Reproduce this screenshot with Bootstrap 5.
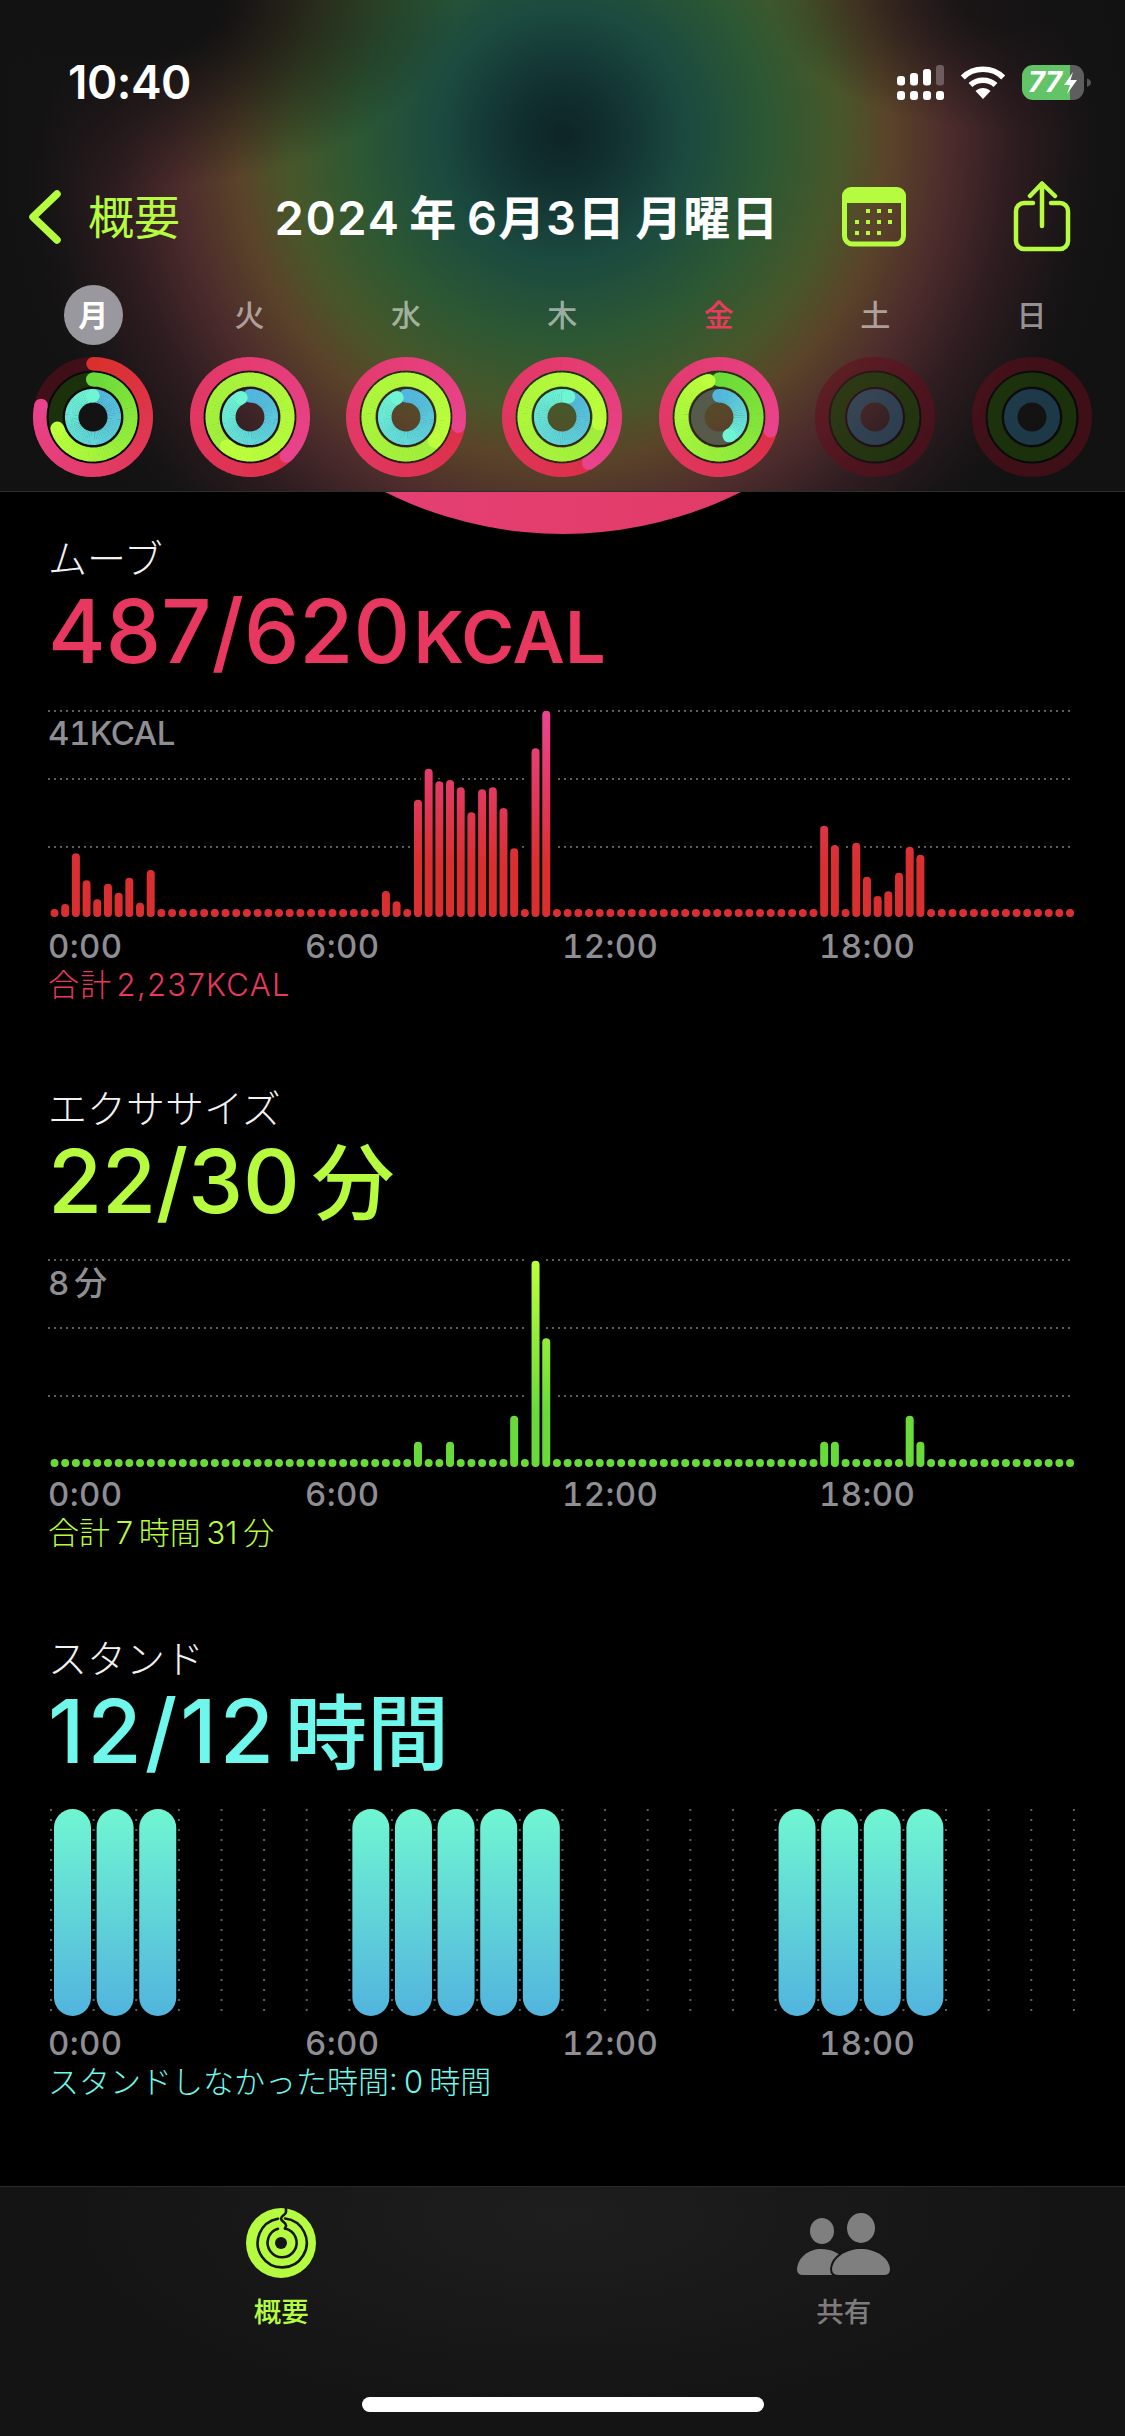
<!doctype html>
<html lang="ja">
<head>
<meta charset="utf-8">
<title>アクティビティ</title>
<link href="https://cdn.jsdelivr.net/npm/bootstrap@5.3.0/dist/css/bootstrap.min.css" rel="stylesheet">
<style>
html,body{margin:0;background:#000}
body{width:1125px;height:2436px;overflow:hidden;font-family:Inter,"Noto Sans CJK JP",sans-serif;color:#fff}
.screen{width:1125px;height:2436px}
.hdr{height:492px;border-bottom:1px solid #2e2e2e;flex:none;
 background:radial-gradient(ellipse 340px 190px at 120px 0,rgba(18,18,18,1) 30%,rgba(18,18,18,0) 100%),radial-gradient(ellipse 240px 130px at 1010px 0,rgba(18,18,18,.8) 20%,rgba(18,18,18,0) 100%),radial-gradient(circle 560px at 563px 135px,#0e2426 0,#113030 50px,#1b4a40 125px,#2c5833 205px,#47572a 275px,#5a4429 325px,#4d2c2c 385px,#2e1c20 450px,#161415 520px,#121212 560px)}
.stat{padding:58px 34px 0 68px;height:106px}
.clock{font-size:46px;font-weight:600;line-height:48px;letter-spacing:-.5px}
.navrow{margin-top:66px;height:90px;padding-left:27px}
.back{color:#b5fb40;font-size:46px;margin-left:25px;width:92px;white-space:nowrap;line-height:1}
.ttl{font-size:47px;font-weight:600;margin-left:94px;width:502px;white-space:nowrap;line-height:1;letter-spacing:1px;word-spacing:-4px;font-variant-numeric:tabular-nums}
.cal{margin-left:66px}.shr{margin-left:106px}
.days{margin-top:23px;padding:0 15px}
.cell{width:156.4px;flex:none}
.dl{height:60px;line-height:60px;font-size:30px;font-weight:500;color:rgba(255,255,255,.55)}
.dl.on span{display:inline-block;width:59px;height:60px;border-radius:50%;background:#98989e;color:#fff;font-weight:600}
.dl.fri{color:#ea3a5e}
.ringrow{margin-top:7px}
.mainv{height:1694px;overflow:hidden;flex:none}
.blob{position:absolute;left:165px;top:-754px;width:796px;height:796px;border-radius:50%;background:linear-gradient(90deg,#e7417a,#de3a60)}
.sec{height:550px;padding:44px 0 0 48px;position:relative}
.sect{font-size:39px;line-height:46px;height:46px;color:#f2f2f2;font-weight:300;white-space:nowrap}
.big{font-size:88px;line-height:90px;height:90px;margin-top:4px;font-weight:500;white-space:nowrap}
.big.c-ex{letter-spacing:-.3px}
.big.c-st{letter-spacing:3px}
.big small{font-size:72px;font-weight:600;letter-spacing:0;margin-left:3px}
.big .cj{font-size:83px;font-weight:500;margin-left:12px;letter-spacing:0}
.big.c-st .cj{margin-left:8px;font-size:82px}
.c-move{color:#e8385f}.c-ex{color:#b7fb3f}.c-st{color:#6ef7ea}
.plot{position:relative;margin-top:29px}
.plot svg{display:block;overflow:visible}
.ymax{position:absolute;left:0;top:10px;font-size:33px;line-height:36px;color:#8e8e93;font-weight:500;letter-spacing:-.5px;word-spacing:-3px;font-variant-numeric:tabular-nums}
.axis{margin-top:5px;height:36px}
.tk{width:257px;flex:none;font-size:33px;line-height:36px;color:#8e8e93;font-weight:500;letter-spacing:.4px;font-variant-numeric:tabular-nums}
.tot{margin-top:3px;font-size:31px;line-height:36px;font-weight:300;white-space:nowrap;word-spacing:-6px}
.tot.c-move{letter-spacing:1.3px}
.tot.c-ex{word-spacing:-3px}
.tot.c-st{word-spacing:-2.5px}
.tabs{height:250px;border-top:1px solid #2a2a2a;flex:none;background:radial-gradient(ellipse 500px 200px at 50% 30px,#1e1e1e,#141414)}
.tabi{height:70px;margin-top:21px}
.tabl{margin-top:17px;font-size:27.5px;line-height:34px;font-weight:500}
.tabl.act{color:#b5fb40}.tabl.off{color:#7d7d7d}
.homeb{width:402px;height:15px;border-radius:8px;background:#fff;margin:68px auto 0}
.batt{overflow:visible;margin-left:16px}
</style>
</head>
<body>
<div class="screen d-flex flex-column">
 <header class="hdr">
  <div class="stat d-flex align-items-center justify-content-between">
   <div class="clock">10:40</div>
   <div class="d-flex align-items-center">
    <svg width="47" height="35" viewBox="895 64 47 35"><g fill="#fff"><rect x="895" y="75" width="8" height="9.500" rx="3"/><rect x="908" y="72" width="8" height="12.500" rx="3"/><rect x="921" y="68" width="8" height="16.500" rx="3"/><rect x="934" y="64" width="8" height="20.500" rx="3" fill="#6e5c5e"/><rect x="895" y="90" width="8" height="9" rx="3"/><rect x="908" y="90" width="8" height="9" rx="3"/><rect x="921" y="90" width="8" height="9" rx="3"/><rect x="934" y="90" width="8" height="9" rx="3"/></g></svg>
    <svg class="ms-3" width="46" height="34" viewBox="0 0 46 34"><g fill="none" stroke="#fff" stroke-width="5.500"><path d="M2.800 12.500C13.500 1.500 32.500 1.500 43.200 12.500"/><path d="M10.500 20C17 13.500 29 13.500 35.500 20"/></g><path d="M15.500 26C20 22 26 22 30.500 26L23 34Z" fill="#fff"/></svg>
    <svg class="batt" width="69" height="35" viewBox="0 0 69 35">
     <defs><clipPath id="bc"><rect width="62" height="35" rx="11"/></clipPath></defs>
     <g clip-path="url(#bc)"><rect width="48" height="35" fill="#62c466"/><rect x="48" width="14" height="35" fill="#5e5e5e"/></g>
     <path d="M65 13.500C68 14 69 16 69 17.500S68 21 65 22Z" fill="#555"/>
     <text x="6" y="27" font-size="29" font-weight="700" fill="#fff" font-family="Inter,sans-serif" font-style="italic" letter-spacing="-.5">77</text>
     <path d="M51 7L42 20H48L45 29L55 15H48.500Z" fill="#fff"/>
    </svg>
   </div>
  </div>
  <div class="navrow d-flex align-items-center">
   <svg width="36" height="56" viewBox="0 0 36 56"><path d="M30 5L6 28L30 51" fill="none" stroke="#b5fb40" stroke-width="7.500" stroke-linecap="round" stroke-linejoin="round"/></svg>
   <div class="back">概要</div>
   <div class="ttl">2024 年 6月3日 月曜日</div>
   <svg class="cal" width="64" height="60" viewBox="842 187 64 60">
    <rect x="844.500" y="190" width="59" height="54" rx="8" fill="none" stroke="#b5fb40" stroke-width="5"/>
    <path d="M842 203V196a9 9 0 0 1 9-9h46a9 9 0 0 1 9 9v7Z" fill="#b5fb40"/>
    <g fill="#b5fb40"><rect x="866" y="209" width="4" height="4"/><rect x="877" y="209" width="4" height="4"/><rect x="888" y="209" width="4" height="4"/><rect x="855" y="220" width="4" height="4"/><rect x="866" y="220" width="4" height="4"/><rect x="877" y="220" width="4" height="4"/><rect x="888" y="220" width="4" height="4"/><rect x="855" y="231" width="4" height="4"/><rect x="866" y="231" width="4" height="4"/><rect x="877" y="231" width="4" height="4"/></g>
   </svg>
   <svg class="shr" width="60" height="72" viewBox="1010 179 60 72" fill="none" stroke="#b5fb40" stroke-width="4.500" stroke-linecap="round" stroke-linejoin="round">
    <path d="M1031 201H1022a8 8 0 0 0-8 8v30a8 8 0 0 0 8 8h36a8 8 0 0 0 8-8v-30a8 8 0 0 0-8-8h-9"/>
    <path d="M1040 224V182M1028 194L1040 181.500L1053 194"/>
   </svg>
  </div>
  <div class="days d-flex text-center">
   <div class="cell dl on"><span>月</span></div><div class="cell dl">火</div><div class="cell dl">水</div><div class="cell dl">木</div><div class="cell dl fri">金</div><div class="cell dl">土</div><div class="cell dl">日</div>
  </div>
  <div class="days ringrow d-flex text-center" id="rings"></div>
 </header>

 <main class="mainv position-relative">
  <div class="blob"></div>
  <section class="sec">
   <div class="sect">ムーブ</div>
   <div class="big c-move">487/620<small>KCAL</small></div>
   <div class="plot"><svg id="p1" width="1077" height="218" viewBox="48 0 1077 218"></svg><div class="ymax">41KCAL</div></div>
   <div class="axis d-flex"><div class="tk">0:00</div><div class="tk">6:00</div><div class="tk">12:00</div><div class="tk">18:00</div></div>
   <div class="tot c-move">合計 2,237KCAL</div>
  </section>
  <section class="sec">
   <div class="sect">エクササイズ</div>
   <div class="big c-ex">22/30<span class="cj">分</span></div>
   <div class="plot"><svg id="p2" width="1077" height="216" viewBox="48 0 1077 216"></svg><div class="ymax">8 分</div></div>
   <div class="axis d-flex"><div class="tk">0:00</div><div class="tk">6:00</div><div class="tk">12:00</div><div class="tk">18:00</div></div>
   <div class="tot c-ex">合計 7 時間 31 分</div>
  </section>
  <section class="sec">
   <div class="sect">スタンド</div>
   <div class="big c-st">12/12<span class="cj">時間</span></div>
   <div class="plot"><svg id="p3" width="1077" height="215" viewBox="48 0 1077 215"></svg></div>
   <div class="axis d-flex"><div class="tk">0:00</div><div class="tk">6:00</div><div class="tk">12:00</div><div class="tk">18:00</div></div>
   <div class="tot c-st">スタンドしなかった時間: 0 時間</div>
  </section>
 </main>

 <nav class="tabs">
  <div class="row g-0 text-center">
   <div class="col-6">
    <div class="tabi d-flex justify-content-center align-items-center">
     <svg width="70" height="70" viewBox="-35 -35 70 70">
      <circle r="35" fill="#b5fb40"/>
      <g fill="none" stroke="#161616" stroke-width="2.600" stroke-linecap="round">
       <path d="M4 -24.500A24.500 24.500 0 1 1 -3 -24.300"/>
       <path d="M4 -14.500A14.500 14.500 0 1 1 -3 -14.200"/>
       <path d="M5 -35V-31C5 -28 0 -27.500 0 -24.500C0 -21.500 6 -20 5 -17C4.500 -15.500 4 -15 4 -14.500"/>
      </g>
      <circle r="6" fill="#161616"/>
     </svg>
    </div>
    <div class="tabl act">概要</div>
   </div>
   <div class="col-6">
    <div class="tabi d-flex justify-content-center align-items-center">
     <svg width="110" height="75" viewBox="790 2205 110 75">
      <g fill="#7f7f7f">
       <ellipse cx="823" cy="2230" rx="12" ry="13"/><ellipse cx="862" cy="2227" rx="14" ry="15"/>
       <path d="M804 2274Q798 2274 798 2268C799 2256 810 2248 822 2248C832 2248 840 2252 845 2258V2274Z"/>
       <path d="M840 2274Q833 2274 833 2268C834 2256 848 2248 862 2248C876 2248 890 2256 891 2268Q891 2274 885 2274Z" stroke="#161616" stroke-width="4" paint-order="stroke"/>
      </g>
     </svg>
    </div>
    <div class="tabl off">共有</div>
   </div>
  </div>
  <div class="homeb"></div>
 </nav>
</div>

<script>
function hex(a,b,t){var r='#';for(var i=1;i<7;i+=2){var x=parseInt(a.substr(i,2),16),y=parseInt(b.substr(i,2),16);var v=Math.round(x+(y-x)*t).toString(16);r+=(v.length<2?'0':'')+v;}return r;}
function pt(r,d){var a=(d-90)*Math.PI/180;return [65+r*Math.cos(a),65+r*Math.sin(a)];}
function arc(r,d1,d2){var p=pt(r,d1),q=pt(r,d2);return 'M'+p[0].toFixed(2)+' '+p[1].toFixed(2)+'A'+r+' '+r+' 0 0 1 '+q[0].toFixed(2)+' '+q[1].toFixed(2);}
var K={r:{r:53.25,w:13.5,a:'#d9302e',a2:'#dc3048',b:'#e9438d',t:'rgba(100,12,30,.55)'},g:{r:37.5,w:14,a:'#6bdb3a',a2:'#9fee3c',b:'#bcff3c',t:'rgba(30,62,10,.7)'},b:{r:21.25,w:13.5,a:'#52b6de',a2:'#52b6de',b:'#6ff5d3',t:'rgba(40,95,125,.5)'}};
function ringSvg(v){
 var s='<svg class="d-block mx-auto" width="130" height="130" viewBox="0 0 130 130">';
 ['r','g','b'].forEach(function(k,i){
  var c=K[k],p=v[i],tr=(i==2&&v.bt)?v.bt:c.t;
  if(v.dim||p<1) s+='<circle cx="65" cy="65" r="'+c.r+'" fill="none" stroke="'+tr+'" stroke-width="'+c.w+'"/>';
  if(i<2) s+='<circle cx="65" cy="65" r="'+(c.r-c.w/2-1+(i?-.5:0)-.1)+'" fill="none" stroke="rgba(0,0,0,.45)" stroke-width="2"/>';
  if(v.dim) return;
  var end=360*p,start=p>=1?end-360:0,len=end-start,n=Math.round(len/5),a0=p>=1?c.a2:c.a;
  if(p>=1){var h=pt(c.r,end+3);s+='<circle cx="'+h[0]+'" cy="'+h[1]+'" r="'+(c.w/2)+'" fill="rgba(0,0,0,.35)"/>';}
  else{var st=pt(c.r,start);s+='<circle cx="'+st[0]+'" cy="'+st[1]+'" r="'+(c.w/2)+'" fill="'+a0+'"/>';}
  for(var j=0;j<n;j++){var t=j/n;s+='<path d="'+arc(c.r,start+len*j/n,start+len*(j+1)/n+(j<n-1?.8:0))+'" fill="none" stroke="'+hex(a0,c.b,t)+'" stroke-width="'+c.w+'"/>';}
  var e=pt(c.r,end);s+='<circle cx="'+e[0]+'" cy="'+e[1]+'" r="'+(c.w/2)+'" fill="'+c.b+'"/>';
 });
 return s+'</svg>';
}
var D=[[.785,.70,1.0],[1+137/360,218/360+1,.93],[1+100/360,1+130/360,.93],[1+150/360,1+100/360,1.05],{0:1+105/360,1:.955,2:.42,bt:'rgba(85,92,76,.95)'},{dim:1,0:0,1:0,2:0},{dim:1,0:0,1:0,2:0}];
var h='';D.forEach(function(v){h+='<div class="cell">'+ringSvg(v)+'</div>';});
document.getElementById('rings').innerHTML=h;

function chart(id,tops,a,b,lines,bottom){
 var s='<defs><linearGradient id="g'+id+'" gradientUnits="userSpaceOnUse" x1="0" y1="'+(lines[0])+'" x2="0" y2="'+bottom+'"><stop offset="0" stop-color="'+a+'"/><stop offset=".75" stop-color="'+b+'"/></linearGradient></defs>';
 lines.forEach(function(y){s+='<line x1="48" x2="1070" y1="'+y+'" y2="'+y+'" stroke="#5e5e5e" stroke-width="2" stroke-dasharray="2 4"/>';});
 var under='',over='';
 for(var i=0;i<96;i++){
  var x=(54.5+10.69*i).toFixed(2),y=bottom-4,t=tops[i];
  var top=t===undefined?y:t/3-15+4;
  if(t!==undefined) under+='M'+x+' '+(y-2)+'V'+(top-6);
  over+='M'+x+' '+y+'V'+top.toFixed(1);
 }
 s+='<path d="'+under+'" stroke="#000" stroke-width="16" fill="none"/>';
 s+='<path d="'+over+'" stroke="url(#g'+id+')" stroke-width="8" stroke-linecap="round" fill="none"/>';
 document.getElementById('p'+id).innerHTML=s;
}
chart(1,{1:642,2:490,3:571,4:628,5:581,6:608,7:563,8:638,9:540,31:603,32:634,34:329,35:236,36:274,37:270,38:292,39:367,40:298,41:292,42:354,43:475,45:175,46:62,72:407,73:465,75:458,76:560,77:618,78:604,79:548,80:470,81:494},'#ea4590','#d92f30',[6,74,142],212);
chart(2,{34:605,37:605,43:527,45:62,46:295,72:605,73:605,80:527,81:605},'#bdff3c','#68da3a',[5,73,141],212);
(function(){
 var s='<defs><linearGradient id="g3" gradientUnits="userSpaceOnUse" x1="0" y1="4" x2="0" y2="211"><stop offset="0" stop-color="#70f6d2"/><stop offset="1" stop-color="#52b4de"/></linearGradient></defs>';
 for(var i=0;i<25;i++){var x=(51+42.62*i).toFixed(2);s+='<line x1="'+x+'" x2="'+x+'" y1="4" y2="211" stroke="#5e5e5e" stroke-width="2" stroke-dasharray="2 8"/>';}
 [0,1,2,7,8,9,10,11,17,18,19,20].forEach(function(i){s+='<rect x="'+(54+42.62*i).toFixed(2)+'" y="4" width="37" height="207" rx="18.500" fill="url(#g3)"/>';});
 document.getElementById('p3').innerHTML=s;
})();
</script>
<script src="https://cdn.jsdelivr.net/npm/bootstrap@5.3.0/dist/js/bootstrap.bundle.min.js"></script>
</body>
</html>
